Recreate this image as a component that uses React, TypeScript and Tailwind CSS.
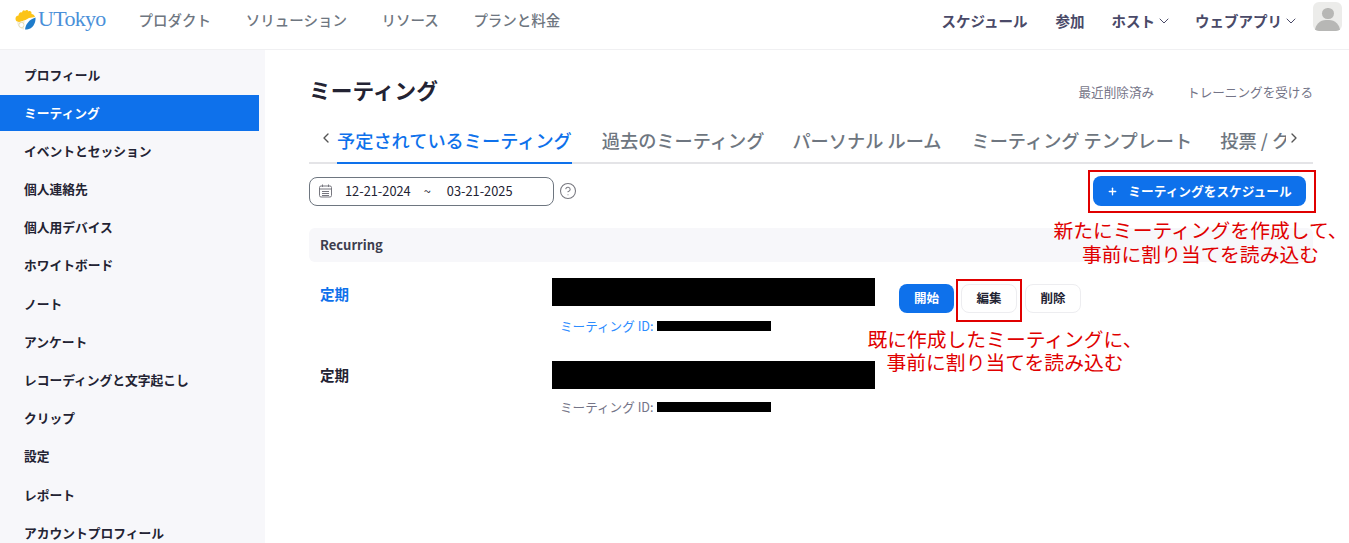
import { ChevronDown, ChevronLeft, ChevronRight, CircleHelp, Plus } from 'lucide-react';

const sideItems = [
  'プロフィール',
  'ミーティング',
  'イベントとセッション',
  '個人連絡先',
  '個人用デバイス',
  'ホワイトボード',
  'ノート',
  'アンケート',
  'レコーディングと文字起こし',
  'クリップ',
  '設定',
  'レポート',
  'アカウントプロフィール',
];

const font = "font-['Noto_Sans_CJK_JP','Noto_Sans',sans-serif]";

function Logo() {
  return (
    <div className="flex items-center">
      <svg width="21" height="21" viewBox="0 0 21 21" className="mr-[2px]">
        <path d="M10.5 11 L5 13 C2 13.5 0.4 12 0.5 9.5 C0.6 7.5 2 6.5 3.5 6.5 C3.5 4 5.5 2.5 7 3.5 C7.5 1.5 9 0.5 10 2 C11 0.5 13 0.5 13.5 2.5 C15 1.5 17 2.5 16.5 5 C18 5 19.5 6 20 8 L14 9 Z" fill="#fcc419" />
        <path d="M10 20.5 C10.5 15.5 14 10.5 20.5 8.5 C21 14 17.5 20 12 20.5 Z" fill="#1e7ccb" />
        <path d="M2 12.5 C4.5 14 7.5 11.5 10 11.5 C9 14 8.5 17 9 20.5 C5 20 2 16.5 2 12.5 Z" fill="#f3efdd" />
        <circle cx="6.5" cy="16" r="2.6" fill="white" stroke="#d8c98a" strokeWidth="0.6" />
      </svg>
      <span className="mt-[-1px] font-['Liberation_Serif',serif] text-[22px] leading-none text-[#4a90d9] tracking-[-0.7px]">UTokyo</span>
    </div>
  );
}

function DateIcon() {
  return (
    <svg width="13" height="14" viewBox="0 0 13 14" fill="none" stroke="#77777f" strokeWidth="1">
      <rect x="0.5" y="2" width="12" height="11" rx="1.5" />
      <path d="M0.5 5h12M3.5 0.5v2.5M9.5 0.5v2.5M3 7.5h7M3 9.5h7M3 11.5h7" />
    </svg>
  );
}

export default function App() {
  return (
    <div className={`${font} relative h-[543px] w-[1349px] overflow-hidden bg-white`}>
      <header className="flex h-[50px] items-center border-b border-[#f0f0f2] pb-[10px] pl-[15px] pr-[7px]">
        <Logo />
        <nav className="ml-[33px] flex gap-[34.6px] text-[14.5px] font-medium text-[#6e7680]">
          <span>プロダクト</span>
          <span>ソリューション</span>
          <span>リソース</span>
          <span>プランと料金</span>
        </nav>
        <div className="ml-auto flex items-center text-[14.5px] font-bold text-[#4a4a68]">
          <span className="mt-[2px]">スケジュール</span>
          <span className="ml-[28px] mt-[2px]">参加</span>
          <span className="ml-[27px] mt-[2px] flex items-center">ホスト<ChevronDown size={16} strokeWidth={1.5} className="ml-[1px]" /></span>
          <span className="ml-[23px] mt-[2px] flex items-center">ウェブアプリ<ChevronDown size={16} strokeWidth={1.5} className="ml-[1px]" /></span>
          <div className="ml-[14px] mt-[-6px] flex h-[29px] w-[29px] flex-col items-center overflow-hidden rounded-[6px] bg-[#ececea] pt-[6px]">
            <div className="h-[12px] w-[12px] rounded-full bg-[#b7b7b5]" />
            <div className="mt-[1px] h-[12px] w-[25px] rounded-t-full bg-[#b7b7b5]" />
          </div>
        </div>
      </header>

      <div className="flex">
        <aside className="h-[493px] w-[265px] shrink-0 bg-[#f7f7fa] pt-[6px]">
          {sideItems.map((item, i) => (
            <div
              key={item}
              className={
                i === 1
                  ? 'my-[1.1px] flex h-[36px] w-[259px] items-center bg-[#0e71eb] pb-[2px] pl-[24px] text-[12.75px] font-bold text-white'
                  : 'flex h-[38.2px] w-[259px] items-center pb-[2px] pl-[24px] text-[12.75px] font-bold text-[#232333]'
              }
            >
              {item}
            </div>
          ))}
        </aside>

        <main className="min-w-0 flex-1 pl-[44px] pr-[36px]">
          <div className="flex h-[83px] items-center justify-between pt-[1px]">
            <h1 className="mt-[-4px] text-[21.7px] font-bold text-[#232333]">ミーティング</h1>
            <div className="flex gap-[33px] text-[12.6px] text-[#747487]">
              <span>最近削除済み</span>
              <span>トレーニングを受ける</span>
            </div>
          </div>

          <div className="flex h-[31px] items-start border-b-2 border-[#e4e4e7] text-[18.2px] font-medium leading-[14px] text-[#6e7680]">
            <ChevronLeft size={16} className="ml-[9px] mr-[3px] mt-[-3px] shrink-0 text-[#555]" />
            <div className="h-[31px] shrink-0 border-b-2 border-[#0e71eb] text-[#0e71eb]">予定されているミーティング</div>
            <span className="ml-[30px] shrink-0">過去のミーティング</span>
            <span className="ml-[28px] shrink-0">パーソナル ルーム</span>
            <span className="ml-[30px] shrink-0">ミーティング テンプレート</span>
            <span className="ml-[28px] w-[66px] shrink-0 overflow-x-clip whitespace-nowrap">投票 / クイズ</span>
            <ChevronRight size={16} className="mt-[-3px] shrink-0 text-[#555]" />
          </div>

          <div className="mt-[12px] flex h-[30px] items-center justify-between">
            <div className="flex items-center">
              <div className="flex h-[29px] w-[245px] items-center rounded-[8px] border border-[#6e7680] pl-[9px] text-[12.8px] text-[#232333]">
                <DateIcon />
                <span className="ml-[13px]">12-21-2024</span>
                <span className="ml-[13px]">~</span>
                <span className="ml-[16px]">03-21-2025</span>
              </div>
              <CircleHelp size={18} strokeWidth={1.4} className="ml-[5px] text-[#77777f]" />
            </div>
            <button className="mr-[7px] flex h-[30px] w-[213px] items-center justify-center rounded-[8px] bg-[#0e71eb] text-[12.7px] font-bold text-white">
              <Plus size={11} strokeWidth={3} className="mr-[10px]" />
              ミーティングをスケジュール
            </button>
          </div>

          <div className="mt-[22px] flex h-[34px] items-center rounded-[6px] bg-[#f7f7fa] pl-[11px] text-[13px] font-bold text-[#3d3d4e]">
            Recurring
          </div>

          <div className="mt-[16px] flex">
            <div className="w-[243px] pl-[11px] text-[14.5px] font-bold leading-[31px] text-[#0e71eb]">定期</div>
            <div>
              <div className="h-[28px] w-[323px] bg-black" />
              <div className="mt-[15px] flex h-[10px] items-center pl-[8px] text-[12.6px] text-[#2d8cff]">
                ミーティング ID:
                <div className="ml-[4px] h-[10px] w-[114px] bg-black" />
              </div>
            </div>
            <div className="ml-[24px] flex h-[29px] items-start gap-[7px] pt-[6px] text-[12.5px] font-bold">
              <button className="h-[29px] w-[55px] rounded-[8px] bg-[#0e71eb] text-white">開始</button>
              <button className="h-[29px] w-[56px] rounded-[8px] border border-[#ededf0] text-[#232333]">編集</button>
              <button className="ml-[1px] h-[29px] w-[56px] rounded-[8px] border border-[#ededf0] text-[#232333]">削除</button>
            </div>
          </div>

          <div className="mt-[30px] flex">
            <div className="w-[243px] pl-[11px] text-[14.5px] font-bold leading-[28px] text-[#232333]">定期</div>
            <div>
              <div className="h-[28px] w-[323px] bg-black" />
              <div className="mt-[13px] flex h-[10px] items-center pl-[8px] text-[12.6px] text-[#747487]">
                ミーティング ID:
                <div className="ml-[4px] h-[10px] w-[114px] bg-black" />
              </div>
            </div>
          </div>
        </main>
      </div>

      {/* annotations drawn on top of the screenshot */}
      <div className="absolute left-[1088px] top-[170px] h-[43px] w-[228px] border-2 border-[#e00000]" />
      <div className="absolute left-[956px] top-[279px] h-[43px] w-[66px] border-2 border-[#e00000]" />
      <div className="absolute left-[1052px] top-[218px] w-[297px] whitespace-nowrap text-center text-[19.8px] leading-[24px] text-[#e00000]">
        新たにミーティングを作成して、<br />事前に割り当てを読み込む
      </div>
      <div className="absolute left-[855px] top-[327px] w-[300px] whitespace-nowrap text-center text-[19.8px] leading-[23px] text-[#e00000]">
        既に作成したミーティングに、<br />事前に割り当てを読み込む
      </div>
    </div>
  );
}
